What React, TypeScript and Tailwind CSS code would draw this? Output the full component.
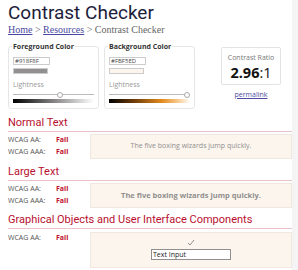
import React from "react";

const sans = { fontFamily: '"Open Sans", "Liberation Sans", sans-serif' };

function ColorBox({ label, hex, swatch, thumb, gradient }: { label: string; hex: string; swatch: string; thumb: number; gradient: string }) {
  return (
    <fieldset className="w-[91px] border border-[#e6e6e6] rounded-[3px] px-[4px] pb-[5px] m-0 min-w-0">
      <legend className="text-[7px] font-bold text-[#333] px-[1px] leading-[9px] ml-[-1px]">{label}</legend>
      <div className="w-[37px] h-[8px] border border-[#ccc] text-[6px] leading-[7px] text-[#444] px-[1px] mt-[6px]">{hex}</div>
      <div className="w-[35px] h-[6px] border border-[#ccc] mt-[3px]" style={{ background: swatch }} />
      <div className="text-[7px] text-[#999] mt-[6px] leading-[9px]">Lightness</div>
      <div className="relative h-[6px] mt-[3px]">
        <div className="absolute left-0 right-0 top-[2px] h-[1px] bg-[#bbb]" />
        <div className="absolute top-0 w-[6px] h-[6px] rounded-full border border-[#aaa] bg-white" style={{ left: thumb }} />
      </div>
      <div className="h-[4px] mt-[1px]" style={{ background: gradient }} />
    </fieldset>
  );
}

function Heading({ children }: { children: React.ReactNode }) {
  return (
    <div className="text-[11px] leading-[14px] text-[#b8102e] border-b border-[#e8c4ca] pb-[1px]" style={{ fontFamily: "Roboto, sans-serif" }}>
      {children}
    </div>
  );
}

function Row({ label }: { label: string }) {
  return (
    <div className="flex text-[7px] leading-[12px] text-[#555]">
      <span className="w-[48px]">{label}</span>
      <span className="font-bold text-[#c0102e]">Fail</span>
    </div>
  );
}

export default function App() {
  return (
    <div className="w-[298px] h-[270px] bg-white flex overflow-hidden" style={sans}>
      <div className="w-[292px] pl-[8px] pt-[4px]">
        <h1 className="text-[19px] leading-[18px] text-[#1d1d3b]" style={{ fontFamily: "Roboto, sans-serif" }}>Contrast Checker</h1>
        <div className="text-[10px] leading-[12px] mt-[2px] text-[#666]" style={{ fontFamily: '"Liberation Serif", serif' }}>
          <a className="text-[#4a4aa0] underline">Home</a> &gt; <a className="text-[#4a4aa0] underline">Resources</a> &gt; Contrast Checker
        </div>
        <div className="flex mt-[6px] items-start">
          <ColorBox label="Foreground Color" hex="#918F8F" swatch="#918F8F" thumb={44} gradient="linear-gradient(to right, #000, #918f8f 55%, #fff)" />
          <div className="w-[5px]" />
          <ColorBox label="Background Color" hex="#FBF5ED" swatch="#FBF5ED" thumb={75} gradient="linear-gradient(to right, #000, #6b3a08 30%, #e38a1e 65%, #f6c98e 85%, #fff)" />
          <div className="ml-[26px] mt-[5px] flex flex-col items-center">
            <div className="w-[60px] h-[38px] border border-[#e3e3e3] rounded-[2px] flex flex-col items-center pt-[5px]">
              <div className="text-[7px] leading-[9px] text-[#777]">Contrast Ratio</div>
              <div className="text-[14.5px] leading-[18px] text-[#111] mt-[2px]"><b>2.96</b>:1</div>
            </div>
            <a className="text-[7px] leading-[9px] text-[#4a4aa0] underline mt-[5px]">permalink</a>
          </div>
        </div>

        <div className="mt-[7px]">
          <Heading>Normal Text</Heading>
          <div className="flex mt-[2px]">
            <div className="w-[82px]">
              <Row label="WCAG AA:" />
              <Row label="WCAG AAA:" />
            </div>
            <div className="flex-1 h-[25px] bg-[#fbf5ed] border border-[#f0e8de] flex items-center justify-center text-[7px] text-[#918f8f]">
              The five boxing wizards jump quickly.
            </div>
          </div>
        </div>

        <div className="mt-[6px]">
          <Heading>Large Text</Heading>
          <div className="flex mt-[2px]">
            <div className="w-[82px]">
              <Row label="WCAG AA:" />
              <Row label="WCAG AAA:" />
            </div>
            <div className="flex-1 h-[25px] bg-[#fbf5ed] border border-[#f0e8de] flex items-center justify-center text-[7.5px] font-bold text-[#918f8f]">
              The five boxing wizards jump quickly.
            </div>
          </div>
        </div>

        <div className="mt-[5px]">
          <Heading>Graphical Objects and User Interface Components</Heading>
          <div className="flex mt-[3px]">
            <div className="w-[82px]">
              <Row label="WCAG AA:" />
            </div>
            <div className="flex-1 h-[36px] bg-[#fbf5ed] border border-[#f0e8de] flex flex-col items-center pt-[6px]">
              <svg width="8" height="7" viewBox="0 0 8 7">
                <path d="M1 4 L3 6 L7 1" fill="none" stroke="#918f8f" strokeWidth="1" />
              </svg>
              <div className="w-[80px] h-[11px] bg-white border border-[#918f8f] text-[7px] leading-[9px] text-[#222] px-[1px] mt-[3px]">Text Input</div>
            </div>
          </div>
        </div>
      </div>
      <div className="w-[6px] bg-[#f4f4f4]" />
    </div>
  );
}
